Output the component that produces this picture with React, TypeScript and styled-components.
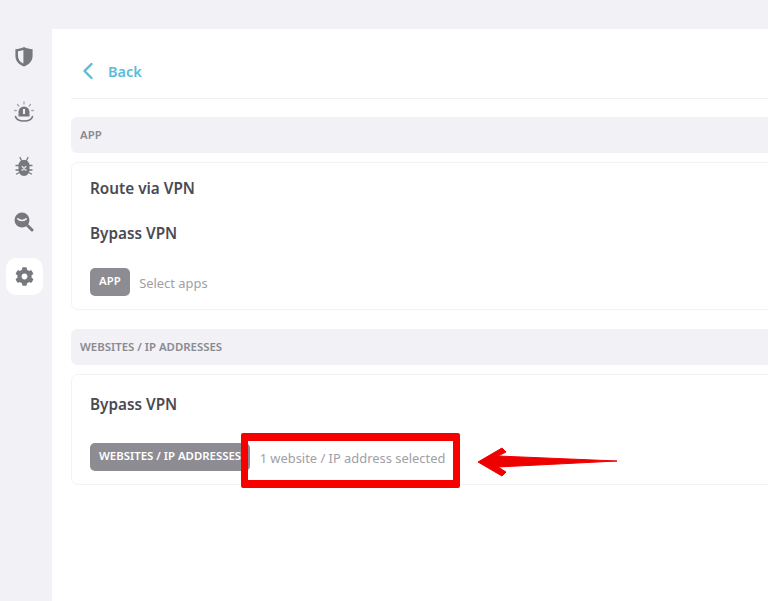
import React from "react";
import styled, { createGlobalStyle } from "styled-components";
import { FaCog } from "react-icons/fa";

const Global = createGlobalStyle`
  html, body { margin: 0; padding: 0; height: 100%; overflow: hidden; background: #f1f1f6; }
  body { font-family: "Noto Sans", "Open Sans", "Liberation Sans", sans-serif; }
  #root { height: 100%; }
`;

const Page = styled.div`
  position: relative;
  display: flex;
  width: 768px;
  height: 601px;
  overflow: hidden;
  background: #f1f1f6;
`;
const Sidebar = styled.nav`
  flex: 0 0 52px;
  display: flex;
  flex-direction: column;
  align-items: center;
  padding: 38px 9px 0 5px;
  box-sizing: border-box;
  gap: 18px;
`;
const NavItem = styled.div<{ $active?: boolean }>`
  width: 37px;
  height: 37px;
  display: flex;
  align-items: center;
  justify-content: center;
  border-radius: 10px;
  color: #77777e;
  background: ${(p) => (p.$active ? "#fff" : "transparent")};
`;
const Main = styled.main`
  flex: 1;
  margin-top: 29px;
  padding-left: 19px;
  background: #fff;
  min-width: 0;
`;
const BackRow = styled.div`
  height: 69px;
  display: flex;
  align-items: center;
  padding-left: 11px;
  border-bottom: 1px solid #f1f1f4;
  color: #5bbcd6;
  font-size: 14.5px;
  font-weight: 600;
`;
const BackInner = styled.div`
  display: flex;
  align-items: center;
  gap: 14px;
  margin-top: 14px;
`;
const SectionHead = styled.div<{ $top: number }>`
  height: 36px;
  margin-top: ${(p) => p.$top}px;
  margin-right: -10px;
  padding-left: 9px;
  padding-bottom: 2px;
  box-sizing: border-box;
  display: flex;
  align-items: center;
  background: #f1f1f6;
  border-radius: 6px;
  color: #8a8a90;
  font-size: 11.4px;
  font-weight: 600;
`;
const Card = styled.section<{ $pad: number; $height: number }>`
  height: ${(p) => p.$height}px;
  box-sizing: border-box;
  margin-top: 9px;
  margin-right: -10px;
  padding: ${(p) => p.$pad}px 18px 0;
  border: 1px solid #f3f3f6;
  border-radius: 7px;
`;
const Row = styled.div`
  height: 45px;
  display: flex;
  align-items: center;
  color: #4a4a53;
  font-size: 15.3px;
  font-weight: 600;
`;
const PickerRow = styled.div<{ $top: number }>`
  display: flex;
  align-items: center;
  gap: 9.5px;
  margin-top: ${(p) => p.$top}px;
`;
const Tag = styled.span`
  height: 28px;
  padding: 0 9px 3px;
  box-sizing: border-box;
  display: inline-flex;
  align-items: center;
  border-radius: 5px;
  background: #8c8c92;
  color: #fff;
  font-size: 11.4px;
  font-weight: 600;
  white-space: nowrap;
`;
const Hint = styled.span`
  padding-top: 2px;
  color: #a0a0a6;
  font-size: 12.9px;
`;
const Highlight = styled.div`
  position: absolute;
  left: 241px;
  top: 433px;
  width: 219px;
  height: 55px;
  box-sizing: border-box;
  border-style: solid;
  border-color: #f60000;
  border-width: 8px 7px;
  border-radius: 2px;
`;
const Arrow = styled.svg`
  position: absolute;
  left: 476px;
  top: 444px;
`;

const Shield = () => (
  <svg width="20" height="21" viewBox="0 0 20 21">
    <path fillRule="evenodd" fill="currentColor" d="M10 1c3 1.400 5.600 2 8.600 2.200V10c0 5-3.600 8.700-8.600 10.500C5 18.700 1.400 15 1.400 10V3.200C4.400 3 7 2.400 10 1zM4 5.200V10c0 3.300 2 6 5.400 7.500V3.900C7.700 4.600 5.900 5 4 5.200z" />
  </svg>
);
const Alarm = () => (
  <svg width="22" height="22" viewBox="0 0 22 22" fill="none">
    <path fill="currentColor" fillRule="evenodd" d="M5.500 15.500V11a5.500 5.500 0 0 1 11 0v4.500zM10 8v5h2V8z" />
    <path stroke="currentColor" strokeWidth="1.600" strokeLinecap="round" d="M2.500 15.500c.8 3 4.500 4.500 8.500 4.500s7.700-1.500 8.500-4.500" />
    <path stroke="#a6a6ac" strokeWidth="1.300" strokeLinecap="round" d="M11 1v2M4.500 3.500l1.300 1.500M17.500 3.500l-1.300 1.500M1.500 9.500h1.800M18.700 9.500h1.800" />
  </svg>
);
const Bug = () => (
  <svg width="20" height="22" viewBox="0 0 20 22" fill="none">
    <path stroke="currentColor" strokeWidth="1.300" strokeLinecap="round" d="M6 1.500l1.500 3M14 1.500l-1.500 3M2 9.500h3M18 9.500h-3M2 14h3M18 14h-3M2.500 18l3-1.500M17.500 18l-3-1.500" />
    <path fill="currentColor" fillRule="evenodd" d="M10 4c3.400 0 5.500 2.400 5.500 5.500v4c0 3.600-2.400 6.500-5.500 6.500s-5.500-2.900-5.500-6.500v-4C4.500 6.400 6.600 4 10 4z" />
    <path stroke="#dcdce2" strokeWidth="1.500" strokeLinecap="round" d="M8.200 10.500l3.600 3.600M11.800 10.500l-3.600 3.600" />
  </svg>
);
const Search = () => (
  <svg width="20" height="20" viewBox="0 0 20 20" fill="none">
    <circle cx="8" cy="8" r="7.500" fill="currentColor" />
    <path stroke="currentColor" strokeWidth="3" strokeLinecap="round" d="M13.500 13.500l4.500 4.500" />
    <path stroke="#f1f1f6" strokeWidth="1.500" strokeLinecap="round" d="M3.800 6.800c2.500 2 5.900 2 8.400 0" />
  </svg>
);
const BackChevron = () => (
  <svg width="12" height="18" viewBox="0 0 12 18" fill="none">
    <path stroke="#5bbcd6" strokeWidth="2.400" strokeLinecap="round" strokeLinejoin="round" d="M9.500 2L2.500 9l7 7" />
  </svg>
);

export default function App() {
  return (
    <Page>
      <Global />
      <Sidebar>
        <NavItem><Shield /></NavItem>
        <NavItem><Alarm /></NavItem>
        <NavItem><Bug /></NavItem>
        <NavItem><Search /></NavItem>
        <NavItem $active><FaCog size={19} /></NavItem>
      </Sidebar>
      <Main>
        <BackRow><BackInner><BackChevron />Back</BackInner></BackRow>
        <SectionHead $top={18}>APP</SectionHead>
        <Card $pad={2} $height={148}>
          <Row>Route via VPN</Row>
          <Row>Bypass VPN</Row>
          <PickerRow $top={13}>
            <Tag>APP</Tag>
            <Hint>Select apps</Hint>
          </PickerRow>
        </Card>
        <SectionHead $top={19}>WEBSITES / IP ADDRESSES</SectionHead>
        <Card $pad={6} $height={111}>
          <Row>Bypass VPN</Row>
          <PickerRow $top={17}>
            <Tag>WEBSITES / IP ADDRESSES</Tag>
            <Hint>1 website / IP address selected</Hint>
          </PickerRow>
        </Card>
      </Main>
      <Highlight />
      <Arrow width="144" height="36" viewBox="0 0 144 36">
        <path fill="#ee0000" stroke="#ee0000" strokeWidth="1" strokeLinejoin="round" d="M2 18L26 4l4 4-8 4 119 5-119 6 8 5-4 4z" />
      </Arrow>
    </Page>
  );
}
